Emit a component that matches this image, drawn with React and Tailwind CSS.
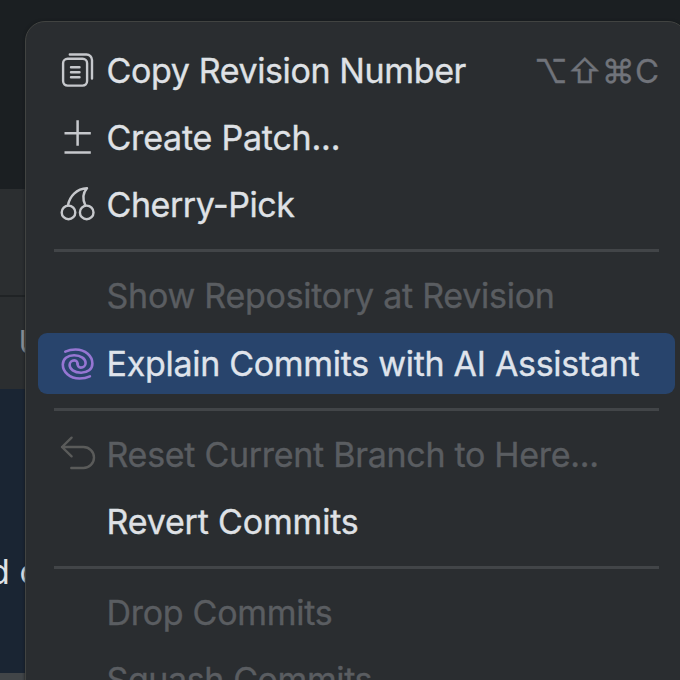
import React from "react";

const stroke = { fill: "none", stroke: "currentColor", strokeLinecap: "round", strokeLinejoin: "round" };

function CopyIcon() {
  return (
    <svg viewBox="0 0 36 36" className="size-9 overflow-visible text-[#c6c8cc]" {...stroke} strokeWidth="2.4">
      <rect x="4.1" y="5.7" width="24" height="26.9" rx="4.5" />
      <path d="M10.8 1.5H27.5a5.5 5.5 0 0 1 5.5 5.5V25.5" />
      <path d="M12 14.3h8.5M12 19.3h8.5M12 24.3h8.5" />
    </svg>
  );
}

function PatchIcon() {
  return (
    <svg viewBox="0 0 36 36" className="size-9 overflow-visible text-[#c6c8cc]" {...stroke} strokeLinecap="butt" strokeWidth="2.5">
      <path d="M5.5 13.3H31.8M18.6 0.3V25.8M5.5 32.6H31.8" />
    </svg>
  );
}

function CherryIcon() {
  return (
    <svg viewBox="0 0 36 36" className="size-9 overflow-visible text-[#c6c8cc]" {...stroke} strokeWidth="2.4">
      <circle cx="9.5" cy="25.4" r="6.8" />
      <circle cx="27.7" cy="25.4" r="6.8" />
      <path d="M9 18.3C10.5 9.5 17.5 1.6 28 1.3C24.3 5.5 23.3 12 26.3 18.3" />
    </svg>
  );
}

function SwirlIcon() {
  const arm =
    "M-12.3 -12.4C-9 -13.9 -6 -14.5 -2 -14.5C8 -14.5 14.8 -8 14.8 -0.5C14.8 5.3 10 8.7 3.5 8.7C-3.5 8.7 -8 5.2 -8 1C-8 -1.8 -5.8 -3.6 -3.2 -3.6C-1 -3.6 0 -1.8 0 0";
  return (
    <svg viewBox="0 0 36 36" className="size-9 overflow-visible text-[#9676d3]" {...stroke} strokeWidth="2.6">
      <g transform="translate(18.6 18)">
        <path d={arm} />
        <path d={arm} transform="rotate(180)" />
      </g>
    </svg>
  );
}

function ResetIcon() {
  return (
    <svg viewBox="0 0 36 36" className="size-9 overflow-visible text-[#5a5b5a]" {...stroke} strokeWidth="2.4">
      <path d="M12.6 0.7L3 10L12.6 19.3M3 10H24.5a10.5 10.5 0 0 1 0 21H12.3" />
    </svg>
  );
}

function Item({ icon, label, shortcut, disabled, selected, spacing = "tracking-[-0.29px]" }) {
  return (
    <div className="flex h-[67.4px] items-center px-3">
      <div
        className={`flex h-[61px] w-full items-center rounded-[9px] pl-[21px] ${
          selected ? "bg-[#28446c] text-[#dfe3eb]" : disabled ? "text-[#5a5d61]" : "text-[#dfe1e5]"
        }`}
      >
        <span className="mr-[11.5px] size-9 shrink-0">{icon}</span>
        <span className={`whitespace-nowrap [-webkit-text-stroke:0.35px] ${spacing}`}>{label}</span>
        {shortcut && <span className="ml-auto mr-4 text-[33px] text-[#70737a] [-webkit-text-stroke:0.3px]">{shortcut}</span>}
      </div>
    </div>
  );
}

function Separator() {
  return (
    <div className="flex h-[23.5px] items-center px-7">
      <div className="h-[3px] w-full bg-[#424548]" />
    </div>
  );
}

export default function App() {
  return (
    <div className="relative h-[680px] w-[680px] overflow-hidden bg-[#1b1f22] font-['Inter',sans-serif]">
      <div className="flex h-full flex-col">
        <div className="h-[189px]" />
        <div className="h-[106px] bg-[#2b2e30]" />
        <div className="h-[2px] bg-[#202325]" />
        <div className="flex h-[92px] items-center bg-[#2b2e30] pl-[18.5px] text-[32px] text-[#8d9094]">User</div>
        <div className="flex h-[284px] items-end bg-[#1a2533] pb-[79px] text-[34px] leading-[44px] text-[#dfe1e5]">
          <span className="-ml-[11px] whitespace-nowrap">d changes</span>
        </div>
        <div className="h-[7px] bg-[#414548]" />
      </div>
      <div className="absolute left-[25px] top-[21px] h-[760px] w-[663px] rounded-[20px] border border-[#414341] bg-[#2a2d30] pt-[15px] text-[34px] leading-[44px] shadow-[0_0_3px_#15181b]">
        <Item icon={<CopyIcon />} label="Copy Revision Number" shortcut="⌥⇧⌘C" spacing="tracking-[-0.38px]" />
        <Item icon={<PatchIcon />} label="Create Patch..." spacing="tracking-[-0.22px]" />
        <Item icon={<CherryIcon />} label="Cherry-Pick" spacing="tracking-[-0.45px]" />
        <Separator />
        <Item label="Show Repository at Revision" disabled spacing="tracking-[-0.26px]" />
        <Item icon={<SwirlIcon />} label="Explain Commits with AI Assistant" selected />
        <Separator />
        <Item icon={<ResetIcon />} label="Reset Current Branch to Here..." disabled />
        <Item label="Revert Commits" spacing="tracking-[-0.18px]" />
        <Separator />
        <Item label="Drop Commits" disabled />
        <Item label="Squash Commits..." disabled spacing="tracking-[-0.4px]" />
      </div>
    </div>
  );
}
